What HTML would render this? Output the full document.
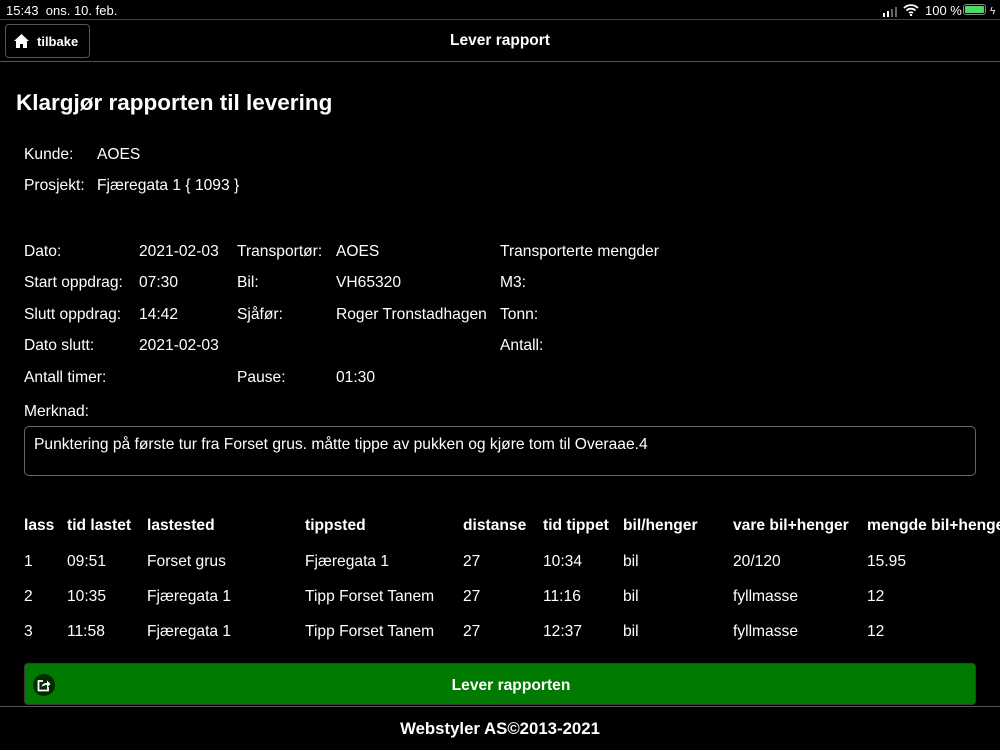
<!DOCTYPE html>
<html><head><meta charset="utf-8"><style>
*{margin:0;padding:0;box-sizing:border-box}
body{width:1000px;height:750px;background:#000;color:#fff;font-family:"Liberation Sans",sans-serif;font-size:15.6px;position:relative;overflow:hidden}
.a{position:absolute;white-space:nowrap;line-height:18px;margin-top:2px}
.b{font-weight:bold}
</style></head><body>
<div class="a" style="left:6px;top:0px;font-size:13px">15:43 &nbsp;ons. 10. feb.</div>
<div class="a" style="left:883px;top:2px;width:14px;height:10px">
<svg width="15" height="10"><rect x="0" y="6" width="2" height="4" fill="#fff"/><rect x="4" y="4" width="2" height="6" fill="#fff"/><rect x="8" y="2" width="2" height="8" fill="#666"/><rect x="12" y="0" width="2" height="10" fill="#666"/></svg></div>
<div class="a" style="left:903px;top:1px"><svg width="16" height="12" viewBox="0 0 16 12"><path d="M1 4a10 10 0 0 1 14 0M3.5 6.5a6.5 6.5 0 0 1 9 0M6 9a3 3 0 0 1 4 0" stroke="#fff" stroke-width="1.8" fill="none"/><circle cx="8" cy="11" r="1.2" fill="#fff"/></svg></div>
<div class="a" style="left:925px;top:0px;font-size:13px">100 %</div>
<div class="a" style="left:963px;top:2px;width:23px;height:11px;border:1px solid #888;border-radius:3px;padding:1px"><div style="background:#4cd964;width:100%;height:100%;border-radius:1px"></div></div>
<div class="a" style="left:990px;top:1px;font-size:10px">ϟ</div>
<div class="a" style="left:0;top:17px;width:1000px;height:1px;background:#444"></div>
<div class="a" style="left:5px;top:22px;width:85px;height:34px;border:1px solid #555;border-radius:4px"></div>
<svg class="a" style="left:14px;top:32px" width="15" height="14" viewBox="0 0 15 14"><path d="M7.5 0L0 7h2v7h4v-4h3v4h4V7h2z" fill="#fff"/></svg>
<div class="a b" style="left:37px;top:31px;font-size:13px">tilbake</div>
<div class="a b" style="left:0;width:1000px;text-align:center;top:30px;font-size:15.5px">Lever rapport</div>
<div class="a" style="left:0;top:59px;width:1000px;height:1px;background:#555"></div>
<div class="a b" style="left:16px;top:88px;font-size:22.5px;line-height:26px">Klargjør rapporten til levering</div>
<div class="a" style="left:24px;top:144px">Kunde:</div><div class="a" style="left:97px;top:144px">AOES</div>
<div class="a" style="left:24px;top:175px">Prosjekt:</div><div class="a" style="left:97px;top:175px">Fjæregata 1 { 1093 }</div>
<div class="a" style="left:24px;top:241px">Dato:</div><div class="a" style="left:139px;top:241px">2021-02-03</div><div class="a" style="left:237px;top:241px">Transportør:</div><div class="a" style="left:336px;top:241px">AOES</div><div class="a" style="left:500px;top:241px">Transporterte mengder</div>
<div class="a" style="left:24px;top:272px">Start oppdrag:</div><div class="a" style="left:139px;top:272px">07:30</div><div class="a" style="left:237px;top:272px">Bil:</div><div class="a" style="left:336px;top:272px">VH65320</div><div class="a" style="left:500px;top:272px">M3:</div>
<div class="a" style="left:24px;top:304px">Slutt oppdrag:</div><div class="a" style="left:139px;top:304px">14:42</div><div class="a" style="left:237px;top:304px">Sjåfør:</div><div class="a" style="left:336px;top:304px">Roger Tronstadhagen</div><div class="a" style="left:500px;top:304px">Tonn:</div>
<div class="a" style="left:24px;top:335px">Dato slutt:</div><div class="a" style="left:139px;top:335px">2021-02-03</div><div class="a" style="left:500px;top:335px">Antall:</div>
<div class="a" style="left:24px;top:367px">Antall timer:</div><div class="a" style="left:237px;top:367px">Pause:</div><div class="a" style="left:336px;top:367px">01:30</div>
<div class="a" style="left:24px;top:401px">Merknad:</div>
<div class="a" style="left:24px;top:424px;width:952px;height:50px;border:1px solid #666;border-radius:5px"></div>
<div class="a" style="left:34px;top:434px">Punktering på første tur fra Forset grus. måtte tippe av pukken og kjøre tom til Overaae.4</div>
<div class="b">
<div class="a" style="left:24px;top:515px">lass</div><div class="a" style="left:67px;top:515px">tid lastet</div><div class="a" style="left:147px;top:515px">lastested</div><div class="a" style="left:305px;top:515px">tippsted</div><div class="a" style="left:463px;top:515px">distanse</div><div class="a" style="left:543px;top:515px">tid tippet</div><div class="a" style="left:623px;top:515px">bil/henger</div><div class="a" style="left:733px;top:515px">vare bil+henger</div><div class="a" style="left:867px;top:515px">mengde bil+henger</div>
</div>
<div class="a" style="left:24px;top:551px">1</div><div class="a" style="left:67px;top:551px">09:51</div><div class="a" style="left:147px;top:551px">Forset grus</div><div class="a" style="left:305px;top:551px">Fjæregata 1</div><div class="a" style="left:463px;top:551px">27</div><div class="a" style="left:543px;top:551px">10:34</div><div class="a" style="left:623px;top:551px">bil</div><div class="a" style="left:733px;top:551px">20/120</div><div class="a" style="left:867px;top:551px">15.95</div>
<div class="a" style="left:24px;top:586px">2</div><div class="a" style="left:67px;top:586px">10:35</div><div class="a" style="left:147px;top:586px">Fjæregata 1</div><div class="a" style="left:305px;top:586px">Tipp Forset Tanem</div><div class="a" style="left:463px;top:586px">27</div><div class="a" style="left:543px;top:586px">11:16</div><div class="a" style="left:623px;top:586px">bil</div><div class="a" style="left:733px;top:586px">fyllmasse</div><div class="a" style="left:867px;top:586px">12</div>
<div class="a" style="left:24px;top:621px">3</div><div class="a" style="left:67px;top:621px">11:58</div><div class="a" style="left:147px;top:621px">Fjæregata 1</div><div class="a" style="left:305px;top:621px">Tipp Forset Tanem</div><div class="a" style="left:463px;top:621px">27</div><div class="a" style="left:543px;top:621px">12:37</div><div class="a" style="left:623px;top:621px">bil</div><div class="a" style="left:733px;top:621px">fyllmasse</div><div class="a" style="left:867px;top:621px">12</div>
<div class="a" style="left:24px;top:661px;width:952px;height:42px;background:#007a00;border:1px solid #3a3a3a;border-radius:4px"></div>
<div class="a" style="left:33px;top:672px;width:22px;height:22px;border-radius:50%;background:#002a00"></div>
<svg class="a" style="left:37px;top:676px" width="14" height="14" viewBox="0 0 14 14"><path d="M6 3H1.5v9.5H11V9" stroke="#fff" stroke-width="1.8" fill="none"/><path d="M4.5 9C5 6 7 5 10 5V2.5L13.5 6 10 9.5V7C8 7 6 7.5 4.5 9z" fill="#fff"/></svg>
<div class="a b" style="left:35px;width:952px;text-align:center;top:675px;font-size:15.6px">Lever rapporten</div>
<div class="a" style="left:0;top:704px;width:1000px;height:1px;background:#555"></div>
<div class="a b" style="left:0;width:1000px;text-align:center;top:718px;font-size:16.8px">Webstyler AS©2013-2021</div>
</body></html>
